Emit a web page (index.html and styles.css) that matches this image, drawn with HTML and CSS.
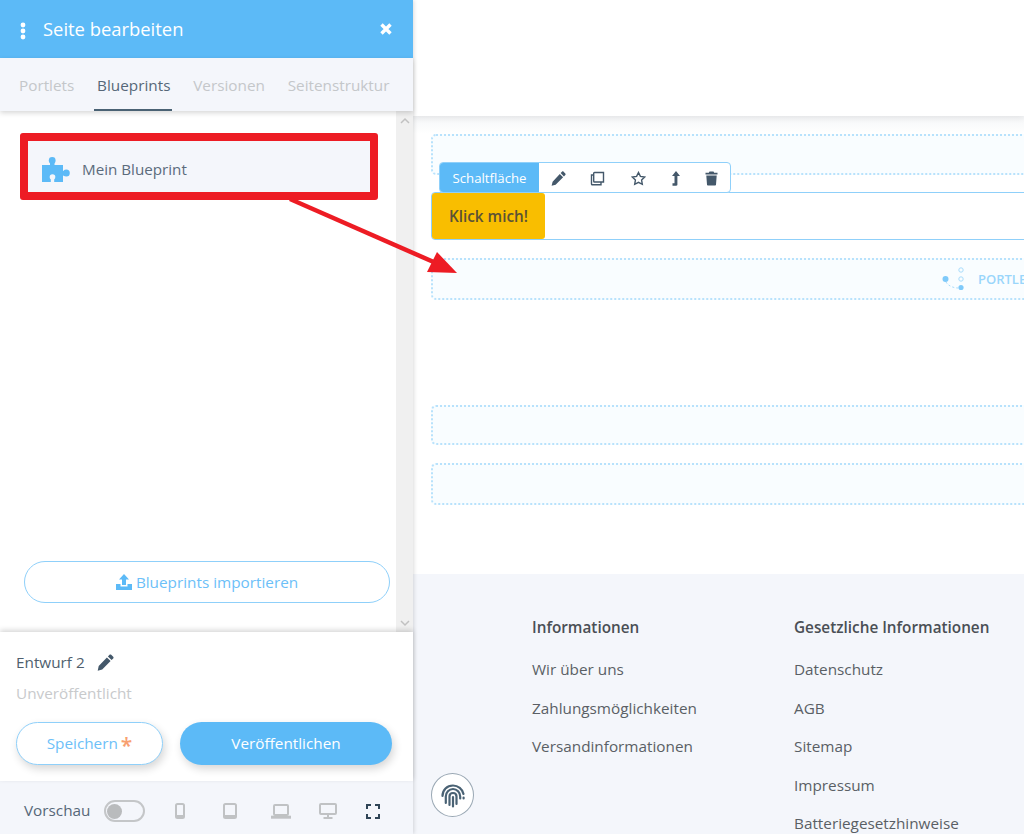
FILE: index.html
```html
<!DOCTYPE html>
<html lang="de">
<head>
<meta charset="utf-8">
<title>Seite bearbeiten</title>
<link rel="stylesheet" href="styles.css">
</head>
<body>
<div class="app">
  <aside class="sidebar">
    <header class="side-head">
      <svg class="kebab" width="6" height="18" viewBox="0 0 6 18"><circle cx="3" cy="3" r="2.400"/><circle cx="3" cy="9" r="2.400"/><circle cx="3" cy="15" r="2.400"/></svg>
      <span class="side-title">Seite bearbeiten</span>
      <svg class="close" width="14" height="14" viewBox="0 0 14 14"><path d="M2.500 2.500l9 9M11.500 2.500l-9 9"/></svg>
    </header>
    <nav class="tabs">
      <span class="tab">Portlets</span>
      <span class="tab active">Blueprints</span>
      <span class="tab">Versionen</span>
      <span class="tab">Seitenstruktur</span>
    </nav>
    <div class="scroll-area">
      <div class="bp-pane">
        <div class="bp-item">
          <svg class="puzzle" width="28" height="25" viewBox="0 0 28 25"><rect x="0" y="8" width="21" height="17"/><rect x="8" y="5" width="4.500" height="4"/><circle cx="10.200" cy="3.500" r="3.400"/><rect x="20" y="14" width="4" height="4.500"/><circle cx="24.300" cy="16" r="3.500"/><circle class="notch" cx="10.500" cy="20" r="2.800"/><rect class="notch" x="8.800" y="20" width="3.400" height="5"/></svg>
          <span>Mein Blueprint</span>
        </div>
        <button class="import-btn">
          <svg width="16" height="16" viewBox="0 0 16 16"><path d="M8 0l5 5.500H10V11H6V5.500H3zM0 10h4.500v2.500h7V10H16v6H0z"/></svg>
          <span>Blueprints importieren</span>
        </button>
      </div>
      <div class="scrollbar">
        <svg width="12" height="8" viewBox="0 0 12 8"><path d="M2 6l4-4 4 4"/></svg>
        <svg width="12" height="8" viewBox="0 0 12 8"><path d="M2 2l4 4 4-4"/></svg>
      </div>
    </div>
    <section class="draft">
      <div class="draft-name">
        <span>Entwurf 2</span>
        <svg width="17" height="17" viewBox="0 0 17 17"><path class="dark-fill" d="M12.500.8c.5-.5 1.200-.5 1.700 0l2 2c.5.500.5 1.200 0 1.700l-1.600 1.600-3.700-3.700zM9.900 3.400l3.700 3.700-8.400 8.400-4.500 1.200 1-4.700z"/></svg>
      </div>
      <div class="draft-state">Unveröffentlicht</div>
      <div class="draft-actions">
        <button class="btn-save">Speichern <span class="star">*</span></button>
        <button class="btn-publish">Veröffentlichen</button>
      </div>
    </section>
    <footer class="preview">
      <span class="preview-label">Vorschau</span>
      <span class="toggle"><span class="knob"></span></span>
      <svg class="dev phone" width="10" height="16" viewBox="0 0 10 16"><rect x="1" y="1" width="8" height="14" rx="1.500"/><path d="M1 13.500h8" stroke-width="3"/></svg>
      <svg class="dev tablet" width="14" height="16" viewBox="0 0 14 16"><rect x="1" y="1" width="12" height="14" rx="1.500"/><path d="M1 13.500h12" stroke-width="3"/></svg>
      <svg class="dev laptop" width="20" height="15" viewBox="0 0 20 15"><rect x="3" y="1" width="14" height="10" rx="1"/><path d="M0 13.200h20" stroke-width="3"/></svg>
      <svg class="dev desktop" width="18" height="16" viewBox="0 0 18 16"><rect x="1" y="1" width="16" height="10" rx="1"/><path d="M9 11v3M4.500 15h9" stroke-width="2"/></svg>
      <svg class="full" width="14" height="15" viewBox="0 0 14 15"><path d="M1 5V1h4M9 1h4v4M13 10v4H9M5 14H1v-4"/></svg>
    </footer>
  </aside>

  <main class="page">
    <div class="page-top"></div>
    <div class="page-content">
      <div class="area area-first"></div>
      <div class="selected">
        <a class="cta">Klick mich!</a>
      </div>
      <div class="area area-portlet">
        <svg width="22" height="24" viewBox="0 0 22 24"><circle cx="3.500" cy="12" r="3" class="dot"/><circle cx="19" cy="3" r="2.200" class="ring"/><circle cx="19" cy="12" r="2.200" class="ring"/><circle cx="19" cy="20.500" r="2.600" class="dot"/><path class="link" d="M4 15c2 4 8 6 12 6"/></svg>
        <span class="portlet-label">PORTLE</span>
      </div>
      <div class="area area-third"></div>
      <div class="area area-fourth"></div>
    </div>
    <div class="site-footer">
      <div class="foot-col">
        <h4>Informationen</h4>
        <a>Wir über uns</a>
        <a>Zahlungsmöglichkeiten</a>
        <a>Versandinformationen</a>
      </div>
      <div class="foot-col">
        <h4>Gesetzliche Informationen</h4>
        <a>Datenschutz</a>
        <a>AGB</a>
        <a>Sitemap</a>
        <a>Impressum</a>
        <a>Batteriegesetzhinweise</a>
      </div>
    </div>
    <div class="toolbar">
      <span class="tool-name">Schaltfläche</span>
      <svg class="t-pen" width="15" height="15" viewBox="0 0 15 15"><path class="dark-fill" d="M11 .7c.5-.5 1.100-.5 1.600 0l1.700 1.700c.5.500.5 1.100 0 1.600l-1.400 1.400-3.300-3.300zM8.800 3l3.300 3.300-7.500 7.500-4 1 1-4.100z"/></svg>
      <svg class="t-copy" width="15" height="15" viewBox="0 0 15 15"><path class="dark-line" d="M4.500 1.500h9V11H4.500a.8.800 0 0 1-.8-.8V2.300a.8.800 0 0 1 .8-.8z"/><path class="dark-line" d="M3.700 4H1.500v9c0 .5.300.8.800.8H11v-2.800"/></svg>
      <svg class="t-star" width="15" height="15" viewBox="0 0 15 15"><path class="dark-line" d="M7.500 1.500l1.900 3.900 4.300.6-3.100 3 .7 4.300-3.800-2-3.800 2 .7-4.300-3.100-3 4.300-.6z"/></svg>
      <svg class="t-up" width="10" height="15" viewBox="0 0 10 15"><path class="dark-fill" d="M6 0l4 5H7.400v8.500c0 .8-.5 1.200-1.200 1.200H2.500v-2.500h2V5H2z"/></svg>
      <svg class="t-trash" width="13" height="15" viewBox="0 0 13 15"><path class="dark-fill" d="M4.500.5h4l.7 1.300h3.300v1.700H.5V1.800h3.300zM1.300 4.500h10.400l-.7 9.300c0 .5-.4.800-.9.800H2.900c-.5 0-.9-.3-.9-.8z"/></svg>
    </div>
    <button class="finger">
      <svg width="26" height="26" viewBox="0 0 26 26"><path d="M2.500 14c0-6 4.500-10.500 10.500-10.500 5 0 9.500 3.500 10.500 8.500M5.800 21v-6.500c0-4.200 3.200-7.500 7.200-7.500s7.200 3.300 7.200 7.500v2M9.500 23v-8.500c0-2 1.500-3.500 3.500-3.500s3.500 1.500 3.500 3.500V22M13 15v9.500M23.600 15.500v1"/></svg>
    </button>
  </main>

  <div class="mark-box"></div>
  <svg class="mark-arrow" width="180" height="85" viewBox="0 0 180 85"><path d="M5 4L160 72" stroke="#ed1c24" stroke-width="4.500" fill="none"/><path d="M152 57L172 78L142 77z" fill="#ed1c24"/></svg>
</div>
</body>
</html>
```

FILE: styles.css
```css
* { box-sizing: border-box; }
html, body { margin: 0; height: 100%; }
body { font-family: "Open Sans", "Noto Sans", sans-serif; color: #4a5568; overflow: hidden; background: #fff; }
button { font-family: inherit; }
.app { display: flex; width: 1024px; height: 834px; position: relative; overflow: hidden; }

.sidebar { width: 413px; height: 834px; flex: none; display: flex; flex-direction: column; background: #fff; box-shadow: 1px 0 4px rgba(0,0,0,.14); position: relative; z-index: 2; }
.side-head { height: 58px; flex: none; background: #5cbaf7; color: #fff; display: flex; align-items: center; padding: 3px 0 0 20px; }
.kebab { fill: #fff; flex: none; }
.side-title { font-size: 18.400px; margin-left: 17px; flex: 1; position: relative; top: -2px; }
.close { stroke: #fff; stroke-width: 3.400; fill: none; margin-right: 20px; flex: none; position: relative; top: -2px; }

.tabs { height: 53px; flex: none; background: #f4f6fb; display: flex; padding: 0 0 0 19px; gap: 22.800px; box-shadow: 0 2px 5px rgba(0,0,0,.16); position: relative; z-index: 1; }
.tab { font-size: 15.300px; color: #c4c7ca; line-height: 55px; position: relative; }
.tab.active { color: #566778; }
.tab.active::after { content: ""; position: absolute; left: -3px; right: -2px; bottom: 0; height: 2px; background: #4a6274; }

.scroll-area { height: 521px; flex: none; display: flex; }
.bp-pane { width: 396px; display: flex; flex-direction: column; padding: 0 6px 0 24px; }
.bp-item { margin-top: 30px; height: 56px; background: #f4f6fb; display: flex; align-items: center; gap: 12px; padding-left: 19px; margin-left: -1px; margin-right: 14px; font-size: 15.200px; color: #5b6b7c; }
.puzzle { fill: #5cbaf7; flex: none; }
.notch { fill: #f4f6fb; }
.import-btn { margin-top: auto; margin-bottom: 29px; height: 42px; width: 366px; border: 1px solid #8fd0fa; border-radius: 21px; background: #fff; color: #6cc0f8; font-size: 15.300px; display: flex; align-items: center; justify-content: center; gap: 4px; padding: 0; }
.import-btn svg { fill: #5cbaf7; }
.scrollbar { width: 17px; background: #f0f0f0; display: flex; flex-direction: column; justify-content: space-between; align-items: center; padding: 6px 0 5px; }
.scrollbar svg { fill: none; stroke: #c1c1c1; stroke-width: 1.500; }

.draft { height: 149px; flex: none; padding: 19px 21px 0 16px; box-shadow: 0 -2px 5px rgba(0,0,0,.16); position: relative; background: #fff; }
.draft-name { display: flex; align-items: center; gap: 12px; font-size: 15.300px; color: #4f5f6e; height: 22px; }
.draft-state { font-size: 15.300px; color: #c8cacc; margin-top: 10px; line-height: 20px; }
.draft-actions { display: flex; gap: 17px; margin-top: 19px; }
.btn-save, .btn-publish { height: 43px; border-radius: 22px; font-size: 15.300px; box-shadow: 2px 4px 8px rgba(0,0,0,.16); padding: 0 0 2px; }
.btn-save { width: 147px; background: #fff; border: 1px solid #8fd0fa; color: #6cc0f8; }
.star { color: #f8a070; font-size: 21px; font-weight: 600; line-height: 10px; vertical-align: -4px; margin-left: -1px; }
.btn-publish { width: 212px; background: #5cbaf7; border: 0; color: #fff; }
.dark-fill { fill: #44586a; }
.dark-line { fill: none; stroke: #44586a; stroke-width: 1.400; }

.preview { flex: 1; background: #f4f6fb; display: flex; align-items: center; padding: 7px 0 0 24px; }
.preview-label { font-size: 15.300px; color: #566778; position: relative; top: -1px; }
.toggle { width: 41px; height: 22px; margin-left: 14px; border: 2px solid #c4c6c8; border-radius: 11px; display: flex; align-items: center; padding-left: 1px; }
.knob { width: 15px; height: 15px; border-radius: 50%; background: #b9bbbd; }
.dev { fill: none; stroke: #c0c2c4; stroke-width: 2; flex: none; }
.phone { margin-left: 30px; }
.tablet { margin-left: 38px; }
.laptop { margin-left: 34px; }
.desktop { margin-left: 28px; }
.full { margin-left: 29px; fill: none; stroke: #2f4456; stroke-width: 2; flex: none; }

.page { flex: 1; height: 834px; min-width: 0; position: relative; overflow: hidden; background: #fff; }
.page-top { height: 116px; background: #fff; box-shadow: 0 2px 6px rgba(0,0,0,.08); position: relative; }
.page-content { height: 458px; padding: 18px 0 0 18px; width: 800px; background: linear-gradient(#f5f6f8, #fff 18px); }
.area { height: 42px; border: 2px dotted #b8e2fc; border-radius: 5px; background: #f9fdff; position: relative; }
.area-first { height: 41px; }
.selected { height: 48px; margin-top: 17px; border: 1px solid #8fd0fa; border-radius: 4px; background: #fff; }
.cta { display: block; width: 113px; height: 46px; background: #f9be00; color: #5b5235; font-weight: 600; font-size: 15.300px; line-height: 46px; text-align: center; border-radius: 3px; }
.area-portlet { margin-top: 18px; display: flex; align-items: center; padding-left: 509px; gap: 14px; }
.dot { fill: #7fcafa; }
.ring { fill: none; stroke: #a9dcfb; stroke-width: 1; }
.link { fill: none; stroke: #a9dcfb; stroke-width: 1; stroke-dasharray: 2 2; }
.portlet-label { font-size: 13px; font-weight: 600; color: #9ad6fb; }
.area-third { margin-top: 105px; height: 40px; }
.area-fourth { margin-top: 18px; height: 42px; }

.site-footer { height: 260px; background: #f4f6fb; display: flex; padding: 42px 0 0 119px; }
.foot-col { width: 262px; flex: none; display: flex; flex-direction: column; }
.foot-col h4 { margin: 0 0 20px; font-size: 15.300px; font-weight: 600; color: #4a4f55; line-height: 22px; }
.foot-col a { font-size: 15.300px; color: #5a5f65; line-height: 22px; margin-bottom: 16.600px; }

.toolbar { position: absolute; left: 26px; top: 162px; width: 292px; height: 31px; background: #fff; border: 1px solid #8fd0fa; border-radius: 4px; display: flex; align-items: center; overflow: hidden; }
.tool-name { width: 99px; height: 100%; flex: none; background: #5cbaf7; color: #fff; font-size: 13.200px; line-height: 31px; text-align: center; }
.toolbar svg { flex: none; margin-top: 2px; }
.t-pen { margin-left: 12px; }
.t-copy { margin-left: 24px; }
.t-star { margin-left: 26px; }
.t-up { margin-left: 24px; }
.t-trash { margin-left: 25px; }

.finger { position: absolute; left: 18px; top: 773px; width: 43px; height: 44px; border-radius: 50%; border: 1.500px solid #9aa8b4; background: #fff; padding: 0; display: flex; align-items: center; justify-content: center; }
.finger svg { fill: none; stroke: #4a6274; stroke-width: 2.200; stroke-linecap: round; }

.mark-box { position: absolute; z-index: 3; left: 20px; top: 133px; width: 358px; height: 67px; border: 8.500px solid #ed1c24; border-radius: 3px; }
.mark-arrow { position: absolute; z-index: 3; left: 285px; top: 195px; }
```
